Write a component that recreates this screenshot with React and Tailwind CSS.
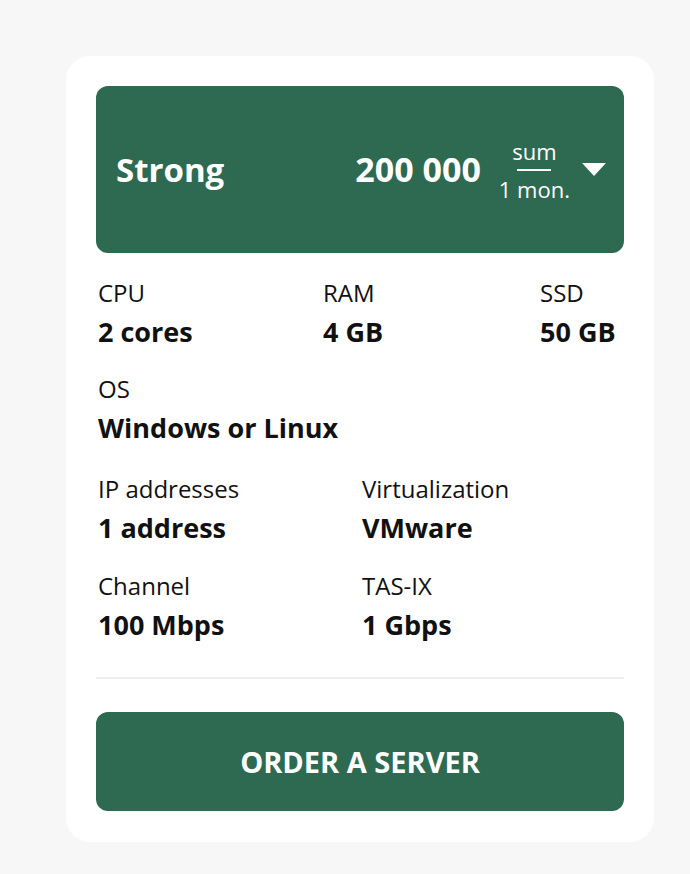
import React from 'react'

const specsTop = [
  { label: 'CPU', value: '2 cores' },
  { label: 'RAM', value: '4 GB' },
  { label: 'SSD', value: '50 GB' },
]

const specsBottom = [
  { label: 'IP addresses', value: '1 address' },
  { label: 'Virtualization', value: 'VMware' },
  { label: 'Channel', value: '100 Mbps' },
  { label: 'TAS-IX', value: '1 Gbps' },
]

function Spec({ label, value }) {
  return (
    <div className="flex flex-col">
      <span className="text-[24px] leading-[38px] text-[#111]">{label}</span>
      <span className="text-[27px] leading-[40px] font-bold text-[#111]">{value}</span>
    </div>
  )
}

export default function App() {
  return (
    <div
      className="min-h-screen bg-[#f7f7f7] pt-[56px] px-[66px]"
      style={{ fontFamily: '"Open Sans", "Noto Sans", sans-serif' }}
    >
      <div className="bg-white rounded-[24px] px-[30px] pt-[30px] pb-[31px] w-[588px]">
        <div className="bg-[#2e6a51] rounded-[12px] h-[167px] flex items-center pl-[20px] pr-[18px] text-white">
          <span className="text-[33px] font-bold flex-1">Strong</span>
          <span className="text-[34px] font-bold mr-[18px]">200 000</span>
          <div className="flex flex-col items-center text-[22px] leading-[26px] mr-[12px]">
            <span>sum</span>
            <span className="block w-[34px] h-[2px] bg-white my-[5px]"></span>
            <span>1 mon.</span>
          </div>
          <svg width="24" height="14" viewBox="0 0 24 14">
            <polygon points="0,0 24,0 12,13" fill="white" />
          </svg>
        </div>

        <div className="grid grid-cols-[225px_217px_auto] mt-[21px] pl-[2px]">
          {specsTop.map((s) => (
            <Spec key={s.label} {...s} />
          ))}
        </div>

        <div className="mt-[18px] pl-[2px]">
          <Spec label="OS" value="Windows or Linux" />
        </div>

        <div className="grid grid-cols-[264px_auto] gap-y-[19px] mt-[22px] pl-[2px]">
          {specsBottom.map((s) => (
            <Spec key={s.label} {...s} />
          ))}
        </div>

        <div className="h-[2px] bg-[#efefef] mt-[32px]"></div>

        <button className="mt-[33px] w-full h-[99px] bg-[#2e6a51] rounded-[12px] text-white text-[29px] font-bold">
          ORDER A SERVER
        </button>
      </div>
    </div>
  )
}
